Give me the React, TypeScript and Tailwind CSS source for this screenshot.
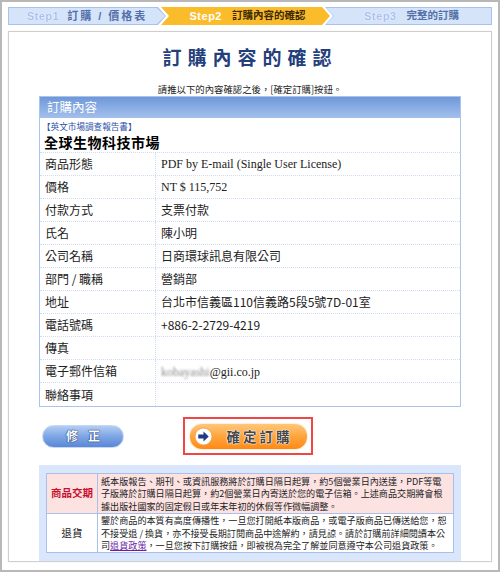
// Order confirmation page — step bar, order detail table, buttons, notice box.

const sans = "font-['Noto_Sans_CJK_TC','Liberation_Sans',sans-serif]";
const serif = "font-['Liberation_Serif','Noto_Sans_CJK_TC',serif]";

const rows: { label: string; value: React.ReactNode; serif?: boolean }[] = [
  { label: "商品形態", value: "PDF by E-mail (Single User License)", serif: true },
  { label: "價格", value: "NT $ 115,752", serif: true },
  { label: "付款方式", value: "支票付款" },
  { label: "氏名", value: "陳小明" },
  { label: "公司名稱", value: "日商環球訊息有限公司" },
  { label: "部門 / 職稱", value: "營銷部" },
  { label: "地址", value: "台北市信義區110信義路5段5號7D-01室" },
  { label: "電話號碼", value: "+886-2-2729-4219" },
  { label: "傳真", value: "" },
  {
    label: "電子郵件信箱",
    value: (
      <span className={serif}>
        <span className="text-[#8a8a8a] blur-[0.8px]">kobayashi</span>@gii.co.jp
      </span>
    ),
  },
  { label: "聯絡事項", value: "" },
];

function StepBar() {
  return (
    <div className="flex h-[18px] font-['Liberation_Sans','Noto_Sans_CJK_TC',sans-serif] font-bold">
      {/* Step 1 */}
      <div className="relative w-[158px] bg-[#a8c2ee] [clip-path:polygon(0_0,calc(100%-8px)_0,100%_50%,calc(100%-8px)_100%,0_100%)]">
        <div className="absolute inset-[1px] flex items-center justify-center gap-2 bg-[#d6e4fa] [clip-path:polygon(0_0,calc(100%-8px)_0,100%_50%,calc(100%-8px)_100%,0_100%)]">
          <span className="text-[11px] tracking-[0.5px] text-[#a9bff0] [text-shadow:0_0_1px_#fff,0_0_1px_#fff]">Step1</span>
          <span className="text-[11px] tracking-[2px] text-[#5470a8]">訂購 / 價格表</span>
        </div>
      </div>
      {/* Step 2 */}
      <div className="-ml-[5px] flex w-[169px] items-center justify-center gap-[10px] bg-[#fbbc2c] pl-[4px] [clip-path:polygon(0_0,calc(100%-8px)_0,100%_50%,calc(100%-8px)_100%,0_100%,8px_50%)]">
        <span className="text-[11px] tracking-[0.5px] text-white">Step2</span>
        <span className="text-[10.5px] text-[#3b2a05]">訂購內容的確認</span>
      </div>
      {/* Step 3 */}
      <div className="relative -ml-[5px] w-[167px] bg-[#a8c2ee] [clip-path:polygon(0_0,100%_0,100%_100%,0_100%,8px_50%)]">
        <div className="absolute inset-[1px] flex items-center justify-center gap-[10px] bg-[#d6e4fa] pl-[6px] [clip-path:polygon(0_0,100%_0,100%_100%,0_100%,8px_50%)]">
          <span className="text-[11px] tracking-[0.5px] text-[#a9bff0] [text-shadow:0_0_1px_#fff,0_0_1px_#fff]">Step3</span>
          <span className="text-[10.5px] text-[#5470a8]">完整的訂購</span>
        </div>
      </div>
    </div>
  );
}

function OrderTable() {
  return (
    <div className="border border-[#aac4ee]">
      <div className="flex h-[21px] items-center bg-gradient-to-b from-[#6f98d9] to-[#a3c0ec] pl-[7px] text-[12.5px] text-white">
        訂購內容
      </div>
      <div className="h-[35px] border-b border-dotted border-[#cfdcf3] px-[2px] pt-[2px]">
        <div className="text-[8.6px] leading-[12px] text-[#2d50a8]">【英文市場調查報告書】</div>
        <div className="pl-[2px] text-[14px] font-bold leading-[20px] tracking-[0.5px] text-black">全球生物科技市場</div>
      </div>
      {rows.map((r, i) => (
        <div
          key={r.label}
          className={`flex h-[23px] items-center text-[12px] text-[#222] ${i < rows.length - 1 ? "border-b border-dotted border-[#cfdcf3]" : ""}`}
        >
          <div className="flex h-full w-[116px] shrink-0 items-center border-r border-dotted border-[#cfdcf3] pl-[5px]">
            {r.label}
          </div>
          <div className={`pl-[5px] ${r.serif ? serif : ""}`}>{r.value}</div>
        </div>
      ))}
    </div>
  );
}

function Buttons() {
  return (
    <div className="mt-[10px] flex items-center">
      <button className="ml-[3px] flex h-[23px] w-[82px] items-center justify-center gap-[10px] rounded-full border border-[#c8d8f2] bg-gradient-to-b from-[#b3cdf3] via-[#7ea5e4] to-[#5a88d6] text-[12px] font-bold text-white [text-shadow:0_0_1px_#24407a,0_0_1px_#24407a,0_0_1px_#24407a]">
        <span>修</span>
        <span>正</span>
      </button>
      <div className="ml-[59px] flex h-[38px] w-[130px] items-center justify-center border-2 border-[#f04646]">
        <div className="flex h-[25px] w-[117px] items-center rounded-[12px] bg-gradient-to-b from-[#ffc778] via-[#ffa43a] to-[#ff8a12] pl-[4px] shadow-[0_0_2px_#f7c58c]">
          <svg width="19" height="19" viewBox="0 0 20 20">
            <circle cx="10" cy="10" r="9" fill="#fff" stroke="#f0a050" strokeWidth="1" />
            <path d="M4.5 8h5.5V4.8l5.5 5.2-5.5 5.2V12H4.5z" fill="#1f3a86" />
          </svg>
          <span className="ml-[14px] text-[13.5px] font-bold tracking-[3px] text-[#474747] [text-shadow:0_0_1px_#fff,0_0_1px_#fff,0_0_2px_#fff]">
            確定訂購
          </span>
        </div>
      </div>
    </div>
  );
}

function Notice() {
  return (
    <div className="mt-[10px] bg-[#d9e6fb] px-[7px] py-[8px]">
      <div className="border border-[#a9c1ea] bg-white text-[9.1px] leading-[12.5px] text-[#222]">
        <div className="flex bg-[#fde2e2]">
          <div className="flex w-[51px] shrink-0 items-center justify-center border-r border-[#a9c1ea] text-[10.5px] font-bold text-[#c8102e]">
            商品交期
          </div>
          <div className="whitespace-nowrap py-[0.5px] pl-[3px]">
            紙本版報告、期刊、或資訊服務將於訂購日隔日起算，約5個營業日內送達，PDF等電
            <br />
            子版將於訂購日隔日起算，約2個營業日內寄送於您的電子信箱。上述商品交期將會根
            <br />
            據出版社國家的固定假日或年末年初的休假等作微幅調整。
          </div>
        </div>
        <div className="flex border-t border-[#a9c1ea]">
          <div className="flex w-[51px] shrink-0 items-center justify-center border-r border-[#a9c1ea] text-[10.5px]">
            退貨
          </div>
          <div className="whitespace-nowrap py-[0.5px] pl-[3px]">
            鑒於商品的本質有高度傳播性，一旦您打開紙本版商品，或電子版商品已傳送給您，恕
            <br />
            不接受退 / 換貨，亦不接受長期訂閱商品中途解約，請見諒。請於訂購前詳細閱讀本公
            <br />
            司<a className="text-[#6b1fa8] underline">退貨政策</a>，一旦您按下訂購按鈕，即被視為完全了解並同意遵守本公司退貨政策。
          </div>
        </div>
      </div>
    </div>
  );
}

export default function App() {
  return (
    <div className={`h-[572px] w-[500px] overflow-hidden border-2 border-[#b8b8b8] bg-white px-[6px] pt-[5px] ${sans}`}>
      <StepBar />
      <div className="mt-[6px] h-[531px] border border-[#cfcfcf] shadow-[0_0_1px_#ddd]">
        <div className="pt-[12px] text-center text-[19px] font-bold leading-[26px] tracking-[6px] text-[#24407c]">
          訂購內容的確認
        </div>
        <div className="mt-[13px] text-center text-[9.4px] leading-[12px] text-[#222]">
          請推以下的內容確認之後，[確定訂購]按鈕。
        </div>
        <div className="mx-[30px] mt-px">
          <OrderTable />
          <Buttons />
          <Notice />
        </div>
      </div>
    </div>
  );
}
